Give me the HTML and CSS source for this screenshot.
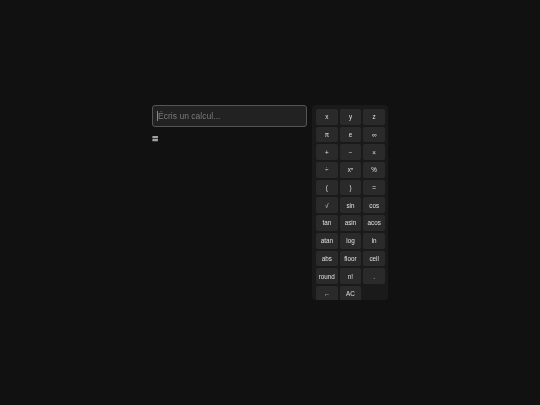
FILE: index.html
```html
<!DOCTYPE html>
<html lang="fr">
<head>
<meta charset="utf-8">
<title>Calculatrice</title>
<link rel="stylesheet" href="styles.css">
</head>
<body>
<main class="app">
  <section class="main-col">
    <div class="input-wrap">
      <input class="calc-input" type="text" placeholder="Écris un calcul...">
      <span class="caret"></span>
    </div>
    <div class="result">=</div>
  </section>
  <section class="keypad">
    <div class="keys">
      <button class="key">x</button><button class="key">y</button><button class="key">z</button>
      <button class="key">π</button><button class="key">e</button><button class="key">∞</button>
      <button class="key">+</button><button class="key">−</button><button class="key">×</button>
      <button class="key">÷</button><button class="key">xⁿ</button><button class="key">%</button>
      <button class="key">(</button><button class="key">)</button><button class="key">=</button>
      <button class="key">√</button><button class="key">sin</button><button class="key">cos</button>
      <button class="key">tan</button><button class="key">asin</button><button class="key">acos</button>
      <button class="key">atan</button><button class="key">log</button><button class="key">ln</button>
      <button class="key">abs</button><button class="key">floor</button><button class="key">ceil</button>
      <button class="key">round</button><button class="key">n!</button><button class="key">.</button>
      <button class="key">←</button><button class="key">AC</button>
    </div>
  </section>
</main>
</body>
</html>
```
FILE: styles.css
```css
* { box-sizing: border-box; }
html, body { height: 100%; }
body {
  margin: 0;
  background: #111111;
  font-family: "Liberation Sans", Arial, sans-serif;
  color: #e6e6e6;
  display: flex;
  align-items: center;
  justify-content: center;
}
.app {
  display: flex;
  gap: 5px;
  align-items: flex-start;
  will-change: transform;
  filter: blur(0.3px);
}
.main-col { width: 155px; }
.input-wrap { position: relative; }
.calc-input {
  display: block;
  width: 100%;
  height: 22px;
  padding: 0 5px;
  background: #222222;
  border: 1px solid #555555;
  border-radius: 3px;
  color: #e6e6e6;
  font: 8.5px "Liberation Sans", Arial, sans-serif;
  letter-spacing: 0.03px;
  outline: none;
}
.calc-input::placeholder { color: #7a7a7a; opacity: 1; }
.caret {
  position: absolute;
  left: 5px;
  top: 6px;
  width: 1px;
  height: 10px;
  background: #8a8a8a;
}
.result {
  margin-top: 4px;
  height: 14px;
  font-size: 11px;
  font-weight: 700;
  line-height: 14px;
  color: #a0a0a0;
  text-shadow: 0 0.5px 0 #a0a0a0;
}
.keypad {
  width: 76px;
  height: 195px;
  padding: 4px 3px 0 4px;
  background: #1a1a1a;
  border-radius: 4px;
  overflow: hidden;
}
.keys {
  display: grid;
  grid-template-columns: repeat(3, 21.67px);
  grid-auto-rows: 15.7px;
  gap: 2px;
}
.key {
  padding: 0;
  background: #2a2a2a;
  border: 0;
  border-radius: 2px;
  color: #e0e0e0;
  font: 6.3px "Liberation Sans", Arial, sans-serif;
  text-align: center;
}
```
